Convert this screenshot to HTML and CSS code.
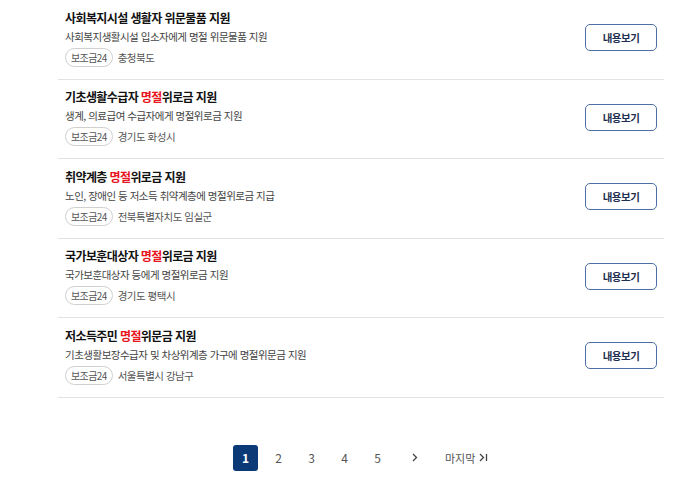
FILE: index.html
```html
<!DOCTYPE html>
<html lang="ko">
<head>
<meta charset="UTF-8" />
<title>지원 목록</title>
<link rel="stylesheet" href="styles.css">
</head>
<body>
<div class="list">
	<div class="item">
		<div class="info">
			<div class="title">사회복지시설 생활자 위문물품 지원</div>
			<div class="desc">사회복지생활시설 입소자에게 명절 위문물품 지원</div>
			<div class="meta"><span class="tag">보조금24</span><span class="region">충청북도</span></div>
		</div>
		<button class="view">내용보기</button>
	</div>
	<div class="item">
		<div class="info">
			<div class="title">기초생활수급자 <em>명절</em>위로금 지원</div>
			<div class="desc">생계, 의료급여 수급자에게 명절위로금 지원</div>
			<div class="meta"><span class="tag">보조금24</span><span class="region">경기도 화성시</span></div>
		</div>
		<button class="view">내용보기</button>
	</div>
	<div class="item">
		<div class="info">
			<div class="title">취약계층 <em>명절</em>위로금 지원</div>
			<div class="desc">노인, 장애인 등 저소득 취약계층에 명절위로금 지급</div>
			<div class="meta"><span class="tag">보조금24</span><span class="region">전북특별자치도 임실군</span></div>
		</div>
		<button class="view">내용보기</button>
	</div>
	<div class="item">
		<div class="info">
			<div class="title">국가보훈대상자 <em>명절</em>위로금 지원</div>
			<div class="desc">국가보훈대상자 등에게 명절위로금 지원</div>
			<div class="meta"><span class="tag">보조금24</span><span class="region">경기도 평택시</span></div>
		</div>
		<button class="view">내용보기</button>
	</div>
	<div class="item">
		<div class="info">
			<div class="title">저소득주민 <em>명절</em>위문금 지원</div>
			<div class="desc">기초생활보장수급자 및 차상위계층 가구에 명절위문금 지원</div>
			<div class="meta"><span class="tag">보조금24</span><span class="region">서울특별시 강남구</span></div>
		</div>
		<button class="view">내용보기</button>
	</div>
</div>
<div class="paging">
	<a class="page on">1</a>
	<a class="page">2</a>
	<a class="page">3</a>
	<a class="page">4</a>
	<a class="page">5</a>
	<a class="next"><svg width="6" height="9" viewBox="0 0 6 9"><path d="M1 1l3.5 3.5L1 8" fill="none" stroke="#444" stroke-width="1.3"/></svg></a>
	<a class="last">마지막 <svg width="9" height="9" viewBox="0 0 9 9"><path d="M1 1l3.5 3.5L1 8" fill="none" stroke="#444" stroke-width="1.3"/><path d="M7.5 1v7" stroke="#444" stroke-width="1.3"/></svg></a>
</div>
</body>
</html>
```
FILE: styles.css
```css
body {
	margin: 0;
	font-family: "Noto Sans CJK KR", "Noto Sans", sans-serif;
	color: #222;
	background: #fff;
}
.list {
	width: 606px;
	margin-left: 58px;
}
.item {
	display: flex;
	align-items: center;
	justify-content: space-between;
	padding: 8px 7px 11px 7px;
	border-bottom: 1px solid #e3e3e3;
	height: 59.5px;
}
.title {
	font-size: 12px;
	font-weight: bold;
	line-height: 18px;
	color: #111;
	letter-spacing: -0.6px;
}
.title em {
	font-style: normal;
	color: #e8141e;
}
.desc {
	font-size: 10.5px;
	line-height: 16px;
	margin-top: 2px;
	color: #444;
	letter-spacing: -0.5px;
}
.meta {
	display: flex;
	align-items: center;
	margin-top: 3px;
}
.tag {
	display: inline-block;
	height: 17px;
	line-height: 17px;
	padding: 0 5px;
	border: 1px solid #d0d0d0;
	border-radius: 10px;
	font-size: 10px;
	color: #555;
	letter-spacing: -0.6px;
}
.region {
	margin-left: 5px;
	font-size: 10.5px;
	color: #555;
	letter-spacing: -0.5px;
}
.view {
	width: 72px;
	height: 27px;
	border: 1px solid #4d6fa3;
	border-radius: 5px;
	background: #fff;
	font-family: inherit;
	font-size: 10.5px;
	font-weight: bold;
	color: #1e2f52;
	letter-spacing: -0.5px;
	padding: 0;
}
.paging {
	display: flex;
	align-items: center;
	margin: 47px 0 0 233px;
	font-size: 12px;
	color: #555;
}
.page {
	width: 25px;
	height: 26px;
	line-height: 26px;
	text-align: center;
	margin-right: 8px;
}
.page.on {
	background: #0b3a77;
	color: #fff;
	font-weight: bold;
	border-radius: 3px;
}
.next {
	display: flex;
	margin-left: 14px;
}
.last {
	display: flex;
	align-items: center;
	gap: 4px;
	margin-left: 27px;
	font-size: 11px;
	color: #555;
}
```
